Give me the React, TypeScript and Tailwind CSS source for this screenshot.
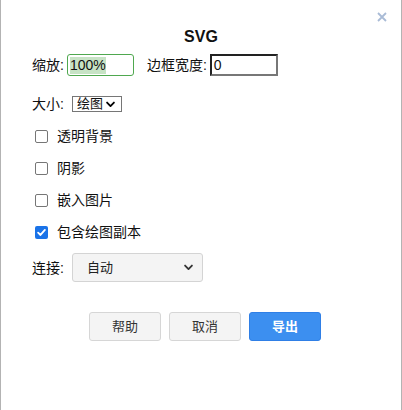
import React from 'react';

const Chevron = ({ className }: { className?: string }) => (
  <svg viewBox="0 0 10 7" className={className} fill="none">
    <path d="M1.2 1.3 L5 5.2 L8.8 1.3" stroke="currentColor" strokeWidth="2" strokeLinecap="round" strokeLinejoin="round" />
  </svg>
);

const CheckRow = ({ label, checked }: { label: string; checked?: boolean }) => (
  <div className="flex h-[32px] items-center pl-[34px]">
    {checked ? (
      <span className="flex h-[13px] w-[13px] items-center justify-center rounded-[2px] bg-[#1a73e8]">
        <svg viewBox="0 0 12 12" className="h-[11px] w-[11px]" fill="none">
          <path d="M2.3 6.2 L4.9 8.7 L9.7 3.2" stroke="white" strokeWidth="2" strokeLinecap="round" strokeLinejoin="round" />
        </svg>
      </span>
    ) : (
      <span className="h-[13px] w-[13px] rounded-[2px] border border-[#767676] bg-white" />
    )}
    <span className="ml-[9px]">{label}</span>
  </div>
);

export default function App() {
  return (
    <div className="relative h-[410px] w-[402px] border-x border-[#b3b3b3] bg-white text-[14px] leading-[20px] text-[#111] font-['Liberation_Sans','Noto_Sans_CJK_SC',sans-serif]">
      {/* close */}
      <button className="absolute right-[14px] top-[12px] text-[#a9bbd6]">
        <svg viewBox="0 0 10 10" className="h-[10px] w-[10px]" fill="none">
          <path d="M1 1 L9 9 M9 1 L1 9" stroke="currentColor" strokeWidth="1.8" />
        </svg>
      </button>

      <div className="pt-[27px] text-center text-[16px] font-bold leading-[20px]">SVG</div>

      {/* zoom / border width */}
      <div className="mt-[7px] flex h-[22px] items-center pl-[31px]">
        <span>缩放:</span>
        <div className="ml-[3px] flex h-[22px] w-[67px] items-center rounded-[3px] border border-[#4fa84f] px-[2px]">
          <span className="bg-[#c7e3c5] leading-[17px]">100%</span>
        </div>
        <span className="ml-[13px]">边框宽度:</span>
        <div className="ml-[3px] flex h-[22px] w-[68px] items-center border-2 border-t-[#222] border-l-[#222] border-r-[#777] border-b-[#777] px-[2px]">
          0
        </div>
      </div>

      {/* size */}
      <div className="mt-[20px] flex h-[16px] items-center pl-[31px]">
        <span>大小:</span>
        <div className="ml-[8px] flex h-[16px] w-[50px] items-center border border-[#767676] pl-[4px] text-[13px]">
          <span>绘图</span>
          <Chevron className="ml-[3px] h-[7px] w-[9px] text-black" />
        </div>
      </div>

      <div className="mt-[8px]">
        <CheckRow label="透明背景" />
        <CheckRow label="阴影" />
        <CheckRow label="嵌入图片" />
        <CheckRow label="包含绘图副本" checked />
      </div>

      {/* connection */}
      <div className="mt-[5px] flex h-[29px] items-center pl-[31px]">
        <span>连接:</span>
        <div className="ml-[8px] flex h-[29px] w-[131px] items-center justify-between rounded-[3px] border border-[#d4d4d4] bg-[#f4f4f4] pl-[14px] pr-[9px] text-[13px] text-[#222]">
          <span>自动</span>
          <Chevron className="h-[7px] w-[9px] text-[#333]" />
        </div>
      </div>

      {/* buttons */}
      <div className="mt-[30px] flex gap-[8px] pl-[88px] text-[13px]">
        <button className="h-[29px] w-[72px] rounded-[3px] border border-[#d6d6d6] bg-[#f4f4f4] text-[#333]">帮助</button>
        <button className="h-[29px] w-[72px] rounded-[3px] border border-[#d6d6d6] bg-[#f4f4f4] text-[#333]">取消</button>
        <button className="h-[29px] w-[72px] rounded-[3px] border border-[#2f7fe6] bg-[#3c8ff0] font-bold text-white">导出</button>
      </div>
    </div>
  );
}
